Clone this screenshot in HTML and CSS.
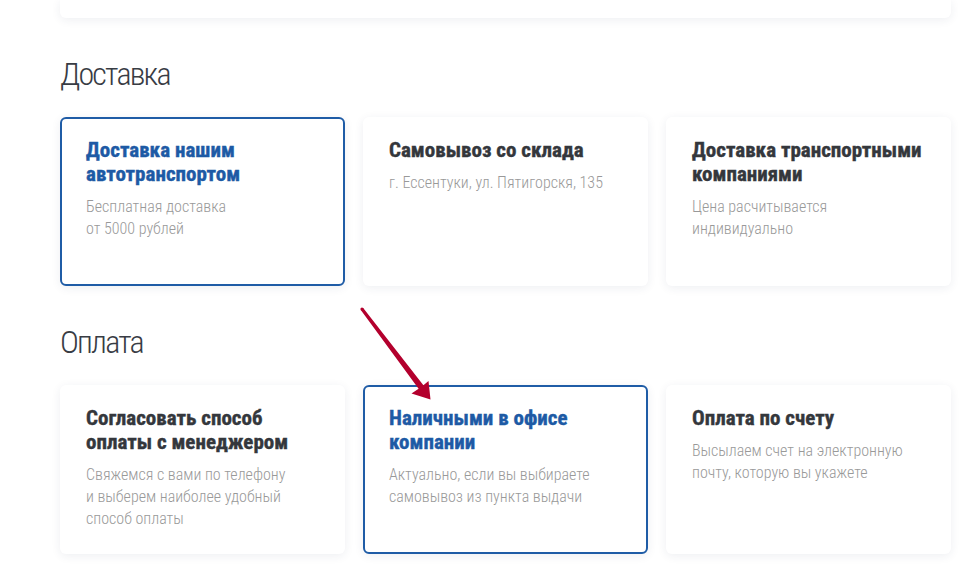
FILE: index.html
```html
<!DOCTYPE html>
<html lang="ru">
<head>
    <meta charset="UTF-8">
    <meta name="viewport" content="width=device-width, initial-scale=1.0">
    <title>Доставка и оплата</title>
    <link rel="stylesheet" href="styles.css">
</head>
<body>
    <div class="page">
        <div class="prev-card"></div>

        <h2 class="section-title">Доставка</h2>
        <div class="cards">
            <div class="card active">
                <div class="card-title">Доставка нашим автотранспортом</div>
                <div class="card-text">Бесплатная доставка<br>от 5000 рублей</div>
            </div>
            <div class="card">
                <div class="card-title">Самовывоз со склада</div>
                <div class="card-text">г. Ессентуки, ул. Пятигорскя, 135</div>
            </div>
            <div class="card">
                <div class="card-title">Доставка транспортными компаниями</div>
                <div class="card-text">Цена расчитывается<br>индивидуально</div>
            </div>
        </div>

        <h2 class="section-title">Оплата</h2>
        <div class="cards">
            <div class="card">
                <div class="card-title">Согласовать способ<br>оплаты с менеджером</div>
                <div class="card-text">Свяжемся с вами по телефону<br>и выберем наиболее удобный<br>способ оплаты</div>
            </div>
            <div class="card active">
                <div class="card-title">Наличными в офисе<br>компании</div>
                <div class="card-text">Актуально, если вы выбираете<br>самовывоз из пункта выдачи</div>
            </div>
            <div class="card">
                <div class="card-title">Оплата по счету</div>
                <div class="card-text">Высылаем счет на электронную<br>почту, которую вы укажете</div>
            </div>
        </div>
    </div>

    <svg class="pointer" width="979" height="579" viewBox="0 0 979 579">
        <circle cx="362" cy="309" r="1.6" fill="#b3002d"/>
        <polygon points="360.8,310.1 363.2,307.9 423.4,385.2 428.5,381 430.5,399.5 411.5,393.5 418.6,388.8" fill="#b3002d"/>
    </svg>
</body>
</html>
```

FILE: styles.css
```css
body {
    margin: 0;
    padding: 0;
    background-color: #fff;
    font-family: "Roboto Condensed", "DejaVu Sans Condensed", Roboto, sans-serif;
    position: relative;
}

.page {
    width: 891px;
    padding-left: 60px;
    padding-bottom: 24px;
}

.prev-card {
    height: 18px;
    background: #fff;
    border-radius: 0 0 6px 6px;
    box-shadow: 0 2px 10px rgba(40, 50, 90, 0.08);
}

.section-title {
    margin: 0;
    padding: 36px 0 23px;
    font-size: 32px;
    line-height: 40px;
    font-weight: 300;
    letter-spacing: -1.8px;
    color: #383c44;
}

.cards {
    display: grid;
    grid-template-columns: repeat(3, 285px);
    gap: 18px;
}

.card {
    height: 169px;
    box-sizing: border-box;
    padding: 19px 24px;
    background: #fff;
    border: 2px solid transparent;
    border-radius: 6px;
    box-shadow: 0 2px 10px rgba(40, 50, 90, 0.08);
}

.card.active {
    border-color: #1f5ca6;
}

.card-title {
    font-size: 21px;
    line-height: 24px;
    font-weight: 700;
    color: #34373c;
    -webkit-text-stroke: 0.4px currentColor;
    margin-bottom: 10px;
}

.card.active .card-title {
    color: #1d5aa5;
}

.card-text {
    font-size: 16px;
    line-height: 22px;
    font-weight: 300;
    color: #999;
}

.pointer {
    position: absolute;
    top: 0;
    left: 0;
    pointer-events: none;
}
```
